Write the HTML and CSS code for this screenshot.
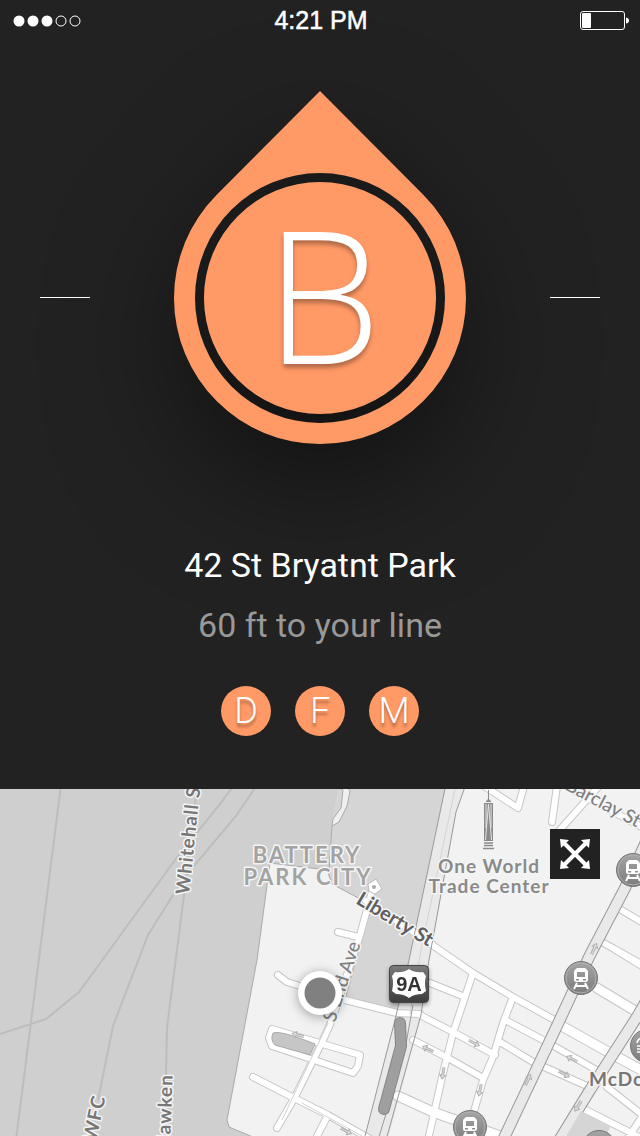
FILE: index.html
```html
<!DOCTYPE html>
<html lang="en">
<head>
<meta charset="utf-8">
<meta name="viewport" content="width=device-width, initial-scale=1">
<title>42 St Bryatnt Park</title>
<link rel="stylesheet" href="styles.css">
</head>
<body>
<header class="status">
  <svg class="signal" width="68" height="12" viewBox="0 0 68 12" role="img" aria-label="Signal: 3 of 5">
    <g fill="#fff"><circle cx="6" cy="6" r="5.500"/><circle cx="20" cy="6" r="5.500"/><circle cx="34" cy="6" r="5.500"/></g>
    <g fill="none" stroke="#fff"><circle cx="48" cy="6" r="5"/><circle cx="62" cy="6" r="5"/></g>
  </svg>
  <time class="clock">4:21 PM</time>
  <svg class="battery" width="49" height="19" viewBox="0 0 49 19" role="img" aria-label="Battery low">
    <rect x=".5" y=".5" width="44" height="18" rx="2.500" fill="none" stroke="#fff"/>
    <rect x="2" y="2" width="9" height="15" rx="1" fill="#fff"/>
    <path d="M46 6.500Q49 7 49 9.500T46 12.500Z" fill="#fff"/>
  </svg>
</header>
<main class="screen">
  <section class="station">
    <div class="pin-row">
      <span class="dash"></span>
      <svg class="pin" width="292" height="353" viewBox="174 91 292 353" role="img" aria-label="Line B">
        <path class="pin-shape" fill-rule="evenodd" d="M320 91L423.500 195A146 146 0 1 1 216.500 195ZM320 173A125 125 0 1 0 320 423A125 125 0 1 0 320 173ZM320 182A116 116 0 1 1 320 414A116 116 0 1 1 320 182Z"/>
        <text class="pin-letter" x="323" y="364" text-anchor="middle">B</text>
      </svg>
      <span class="dash"></span>
    </div>
    <h1 class="name">42 St Bryatnt Park</h1>
    <p class="distance">60 ft to your line</p>
    <nav class="lines" aria-label="Other lines">
      <a class="line" href="#d">D</a>
      <a class="line" href="#f">F</a>
      <a class="line" href="#m">M</a>
    </nav>
  </section>
  <section class="map" aria-label="Map">
    <svg class="map-art" viewBox="0 789 640 347" preserveAspectRatio="xMidYMid slice">
      <defs>
        <linearGradient id="badge" x1="0" y1="0" x2="0" y2="1"><stop offset="0" stop-color="#a5a5a5"/><stop offset="1" stop-color="#7c7c7c"/></linearGradient>
        <linearGradient id="shield" x1="0" y1="0" x2="0" y2="1"><stop offset="0" stop-color="#7b7b7b"/><stop offset="1" stop-color="#3c3c3c"/></linearGradient>
        <g id="train">
          <circle r="16.500" fill="url(#badge)" stroke="#777" stroke-width="1"/>
          <circle r="15" fill="none" stroke="#b0b0b0" stroke-width="1"/>
          <path fill="#fff" fill-rule="evenodd" d="M-4-10H4L5-9Q7-8 7-6V2Q7 4 5 4H-5Q-7 4-7 2V-6Q-7-8-5-9ZM-4-6V-1H4V-6ZM-5 1V2.500H-2V1ZM2 1V2.500H5V1Z"/>
          <path fill="none" stroke="#fff" stroke-width="2" d="M-4 5L-7 11M4 5L7 11M-5 8H5"/>
        </g>
        <path id="arrow" d="M-6-1H2V-3L6 0L2 3V1H-6" fill="#ddd" stroke="#b0b0b0" stroke-width="1"/>
        <g id="streets">
          <path d="M425 940L473 973L513 997L560 1023M430 983L465 997M420 1015L453 1032L495 1055M413 1040L448 1058L483 1078M473 973L453 1033L443 1073L428 1140M513 997L503 1023L493 1057L483 1080L473 1115M507 1021L543 1040L600 1072M500 1042L533 1062L587 1086M611 947L645 968M618 908L645 924M602 942L645 966M582 1108L645 1140M607 1087L645 1117M628 1138L645 1112M484 786L518 808L524 786M557 786L552 822M599 786L558 832M568 787L645 829"/>
          <path d="M373 888L360 935L332 1020L323 1040L295 1097L277 1128M338 932L358 937M278 975L287 982L300 986L345 1000L397 1013L420 1014M272 1029L360 1055L358 1066L353 1073L272 1046L269 1038ZM253 1077L292 1097L328 1115L370 1139M327 1117L315 1140M366 901L432 944"/>
        </g>
        <path id="wide" d="M560 1025L610 1053L645 1072M597 988L637 1012M398 1096L433 1112L500 1136"/>
        <path id="avenues" d="M650 833L625 888L590 955L555 1030L503 1140M645 1003L637 1017L590 1090L560 1139"/>
      </defs>
      <rect x="-400" y="700" width="1440" height="540" fill="#cfcfcf"/>
      <path d="M340 780H700V1200H340L330 883L331 826Z" fill="#d5d5d5"/>
      <path d="M270 863L327 870L332 884L364 901L363 933L345 1000L400 1013L365 1140H260L229 1127L227 1120L257 960Z" fill="#f2f2f2" stroke="#aaa"/>
      <path d="M465 780L456 812L429 960L421 1015L386 1145H700V780Z" fill="#f2f2f2"/>
      <path d="M446 784L409 960L395 1020L364 1140H387L421 1015L429 960L456 812L467 784Z" fill="#e9e9e9"/>
      <g class="ferry">
        <path d="M61 785L16 1140M-200 1094L0 1034L46 1019L79 992L175 860L220 804L234 785M257 785L236 816L193 867L173 895L148 935L113 1026L98 1100M197 785L184 895L167 1028L166 1075"/>
      </g>
      <path d="M332 785L343 790L341 808L333 819L332 826L339 822L347 806L350 791L345 785M332 826L329 870" fill="#f0f0f0" stroke="#aaa"/>
      <use href="#streets" class="road casing"/>
      <use href="#wide" class="road wide-casing"/>
      <use href="#streets" class="road fill"/>
      <use href="#wide" class="road wide-fill"/>
      <use href="#avenues" class="road avenue-casing"/>
      <use href="#avenues" class="road avenue-fill"/>
      <path d="M581 1111L610 1127L605 1140H564Z" fill="#d5d5d5"/>
      <path d="M446 784L409 960L395 1020L364 1140M466 784L456 812L429 960L421 1015L386 1140M413 1005L404 1055L378 1140" class="edge"/>
      <path d="M455 789L421 950L410 1014M328 1023L282 1120M302 1103L331 1119L362 1136" fill="none" stroke="#d3d3d3"/>
      <path d="M273 1033Q280 1030 315 1044L310 1055L275 1045Q270 1040 273 1033Z" fill="#c6c6c6" stroke="#aaa"/>
      <path d="M400 1023L401 1046L384 1109" fill="none" stroke="#868686" stroke-width="12" stroke-linecap="round" stroke-linejoin="round"/>
      <path d="M400 1023L401 1046L384 1109" fill="none" stroke="#9f9f9f" stroke-width="10" stroke-linecap="round" stroke-linejoin="round"/>
      <path d="M368 884L376 879L382 889L375 894L369 891Z" fill="#fff" stroke="#bbb"/><circle cx="374" cy="887" r="2" fill="#aaa"/>
      <use href="#arrow" transform="translate(474 1043) rotate(27)"/>
      <use href="#arrow" transform="translate(428 1049) rotate(206)"/>
      <use href="#arrow" transform="translate(443 1073) rotate(100)"/>
      <use href="#arrow" transform="translate(480 1090) rotate(102)"/>
      <use href="#arrow" transform="translate(528 1080) rotate(-65)"/>
      <use href="#arrow" transform="translate(572 1059) rotate(207)"/>
      <use href="#arrow" transform="translate(564 1074) rotate(28)"/>
      <use href="#arrow" transform="translate(578 1106) rotate(122)"/>
      <use href="#arrow" transform="translate(594 949) rotate(-65)"/>
      <use href="#arrow" transform="translate(298 1035) rotate(194)"/>
      <use href="#arrow" transform="translate(346 1131) rotate(28)"/>
      <path d="M488.500 790V800M486 802L488.500 799L491 802" stroke="#8a8a8a" fill="#8a8a8a"/>
      <path d="M484 803H493V841H484Z" fill="#8a8a8a"/>
      <path d="M485.500 840L488.500 804L491.500 840M486 804V828M491 804V828" stroke="#e4e4e4" fill="none"/>
      <path d="M484 843H493M484 845.500H493M483 848.500H494" stroke="#8a8a8a" stroke-width="1.500"/>
      <g class="label">
        <text class="district" x="307" y="863" text-anchor="middle">BATTERY</text>
        <text class="district" x="308" y="885" text-anchor="middle">PARK CITY</text>
        <text class="place" x="489" y="873" text-anchor="middle">One World</text>
        <text class="place" x="489" y="893" text-anchor="middle">Trade Center</text>
        <text class="place dark" x="589" y="1086">McDonald's</text>
        <text class="route" transform="translate(189 895) rotate(-84)">Whitehall St</text>
        <text class="route" transform="translate(96 1142) rotate(-78)">WFC</text>
        <text class="route" transform="translate(170 1150) rotate(-88)">Hawken</text>
        <text class="street strong" transform="translate(355 903) rotate(31)">Liberty St</text>
        <text class="street" transform="translate(564 789) rotate(28)">Barclay St</text>
        <text class="street" transform="translate(335 1023) rotate(-72)">S End Ave</text>
      </g>
      <use href="#train" x="581" y="978"/>
      <use href="#train" x="470" y="1127"/>
      <use href="#train" x="633" y="870"/>
      <circle cx="647" cy="1046" r="16.500" fill="url(#badge)" stroke="#777"/>
      <path d="M637 1043Q638 1038 643 1038H650M637 1046H650M637 1049H650M637 1052H650" fill="none" stroke="#fff" stroke-width="1.500"/>
      <circle cx="599" cy="1147" r="16.500" fill="url(#badge)" stroke="#777"/>
      <g class="shadow">
        <rect x="389.500" y="965.500" width="39" height="37" rx="4" fill="url(#shield)" stroke="#444"/>
        <path d="M395 972Q403 973 409 969Q415 973 423 972L426 976Q424 983 426 991L422 994Q414 994 409 998Q404 994 396 994L392 991Q394 983 392 976Z" fill="#fff"/>
        <text class="shield-text" x="409" y="991" text-anchor="middle">9A</text>
      </g>
      <g class="marker"><circle cx="320" cy="993" r="22" fill="#fff"/><circle cx="320" cy="993" r="15.500" fill="#808080"/></g>
    </svg>
    <button class="expand" type="button" aria-label="Expand map">
      <svg width="30" height="30" viewBox="0 0 30 30"><path d="M4 4L26 26M26 4L4 26" stroke="#fff" stroke-width="4"/><path d="M0 0L9 1L1 9ZM30 0L21 1L29 9ZM0 30L9 29L1 21ZM30 30L21 29L29 21Z" fill="#fff"/></svg>
    </button>
  </section>
</main>
</body>
</html>
```
FILE: styles.css
```css
* { box-sizing: border-box; }

body {
  display: flex;
  flex-direction: column;
  min-height: 100vh;
  margin: 0;
  background: #222;
  color: #fff;
  font-family: Roboto, "Liberation Sans", sans-serif;
}

.status {
  display: grid;
  grid-template-columns: 1fr auto 1fr;
  align-items: center;
  height: 41px;
  padding: 0 11px 0 13px;
}

.clock {
  font: 25px "Liberation Sans", sans-serif;
  -webkit-text-stroke: thin #fff;
}

.battery { justify-self: end; }

.screen {
  display: flex;
  flex: 1;
  flex-direction: column;
}

.station {
  display: flex;
  flex-direction: column;
  align-items: center;
  padding: 50px 40px 53px;
}

.pin-row {
  display: flex;
  align-items: flex-end;
  justify-content: space-between;
  width: 100%;
  margin-bottom: 91px;
}

.dash {
  width: 50px;
  height: 1px;
  margin-bottom: 146px;
  background: #fff;
}

.pin {
  display: block;
  overflow: visible;
}

.pin-shape {
  fill: #ff9966;
  filter: drop-shadow(0 45px 60px rgba(0, 0, 0, 0.5));
}

.pin-letter {
  fill: #fff;
  font-family: "Open Sans", Roboto, sans-serif;
  font-size: 184px;
  font-weight: 300;
  filter: drop-shadow(0 4px 2px rgba(0, 0, 0, 0.3));
}

.name,
.distance {
  margin: 0;
  font-size: 34px;
  font-weight: 400;
  line-height: 60px;
}

.distance { color: #999; }

.lines {
  display: flex;
  gap: 24px;
  margin-top: 31px;
}

.line {
  width: 50px;
  height: 50px;
  border-radius: 50%;
  background: #ff9966;
  color: #fff;
  font-size: 36px;
  font-weight: 300;
  line-height: 50px;
  text-align: center;
  text-decoration: none;
  text-shadow: 0 4px 3px rgba(0, 0, 0, 0.3);
}

.map {
  position: relative;
  flex: 1;
  min-height: 347px;
  overflow: hidden;
}

.map-art {
  position: absolute;
  inset: 0;
  width: 100%;
  height: 100%;
}

.ferry {
  fill: none;
  stroke: #bdbdbd;
  stroke-width: 2;
}

.road {
  fill: none;
  stroke-linejoin: round;
  stroke-linecap: round;
}

.casing { stroke: #c6c6c6; stroke-width: 8; }
.fill { stroke: #fff; stroke-width: 6; }
.wide-casing { stroke: #c6c6c6; stroke-width: 11; }
.wide-fill { stroke: #fff; stroke-width: 9; }
.avenue-casing { stroke: #999; stroke-width: 12; }
.avenue-fill { stroke: #e9e9e9; stroke-width: 10; }
.edge { fill: none; stroke: #999; }

.label {
  paint-order: stroke;
  stroke: #f5f5f5;
  stroke-width: 3px;
  stroke-linejoin: round;
  font-family: Lato, "Noto Sans", sans-serif;
  font-weight: 700;
}

.district { fill: #a3a3a3; font-size: 22px; letter-spacing: 2px; }
.place { fill: #8a8a8a; font-size: 19px; letter-spacing: 1px; }
.dark { fill: #777; }
.route { fill: #777; font-size: 19px; letter-spacing: 1px; }
.street { fill: #808080; font-size: 19px; font-weight: 500; }
.strong { fill: #606060; font-size: 20px; font-weight: 700; }

.shield-text {
  fill: #333;
  font: bold 20px "Liberation Sans", sans-serif;
}

.shadow { filter: drop-shadow(0 2px 2px rgba(0, 0, 0, 0.4)); }
.marker { filter: drop-shadow(0 2px 6px rgba(0, 0, 0, 0.35)); }

.expand {
  position: absolute;
  top: 40px;
  right: 40px;
  display: grid;
  place-items: center;
  width: 50px;
  height: 50px;
  padding: 0;
  border: 0;
  background: #222;
  cursor: pointer;
}
```
